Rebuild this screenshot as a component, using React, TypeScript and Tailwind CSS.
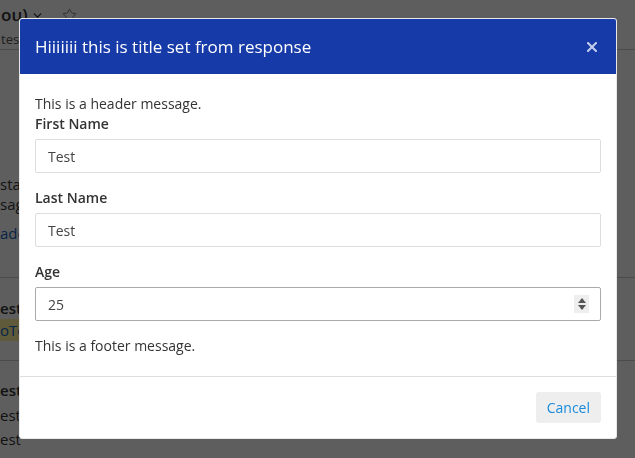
import { ChevronDown, Star } from "lucide-react";

function Backdrop() {
  return (
    <div className="h-[458px] w-[635px] overflow-hidden bg-white text-[#333]" style={{ fontFamily: '"Open Sans", sans-serif' }}>
      <div className="flex h-[30px] items-center">
        <span className="ml-[1px] text-[17px] font-semibold">ou)</span>
        <ChevronDown className="ml-[3px] h-[13px] w-[13px]" strokeWidth={2.5} />
        <Star className="ml-[18px] h-[15px] w-[15px] text-[#777]" strokeWidth={1.5} />
      </div>
      <div className="ml-[1px] h-[19px] text-[13px] leading-[19px] text-[#555]">tes</div>
      <div className="border-b border-[#ccc]" />
      <div className="h-[124px]" />
      <div className="flex flex-col text-[15px] leading-[20px]">
        <span>star</span>
        <span>sag</span>
        <span className="mt-[9px] text-[#1565c0]">ade</span>
      </div>
      <div className="mt-[34px] border-b border-[#ccc]" />
      <div className="mt-[19px] flex flex-col text-[15px] leading-[22px]">
        <span className="font-semibold">est</span>
        <span className="w-fit bg-[#fff59d] text-[#1565c0]">oTe</span>
      </div>
      <div className="mt-[19px] border-b border-[#ccc]" />
      <div className="mt-[17px] flex flex-col text-[15px] leading-[24.5px]">
        <span className="font-semibold">est</span>
        <span>est</span>
        <span>est</span>
      </div>
    </div>
  );
}

export default function App() {
  return (
    <div className="relative h-[458px] w-[635px] overflow-hidden">
      <Backdrop />
      <div className="fixed inset-0 flex items-start bg-black/[0.63] pl-[19px] pt-[18px]" style={{ fontFamily: '"Open Sans", sans-serif' }}>
        <div className="w-[598px] overflow-hidden rounded-[3px] border border-[#e8e8e8] bg-white text-[14px] text-[#333]">
          <div className="flex h-[55px] items-center justify-between bg-[#163aa8] pl-[15px] pr-[19px]">
            <h2 className="text-[17px] text-white">Hiiiiiii this is title set from response</h2>
            <svg viewBox="0 0 10 10" className="h-[10px] w-[10px]" stroke="#c5d0ee" strokeWidth={2} strokeLinecap="square">
              <path d="M1 1 L9 9 M9 1 L1 9" />
            </svg>
          </div>
          <div className="px-[15px] pt-[20px] pb-[20px] leading-[20px]">
            <p>This is a header message.</p>
            <label className="block font-semibold">First Name</label>
            <input
              readOnly
              value="Test"
              className="mt-[5px] block h-[34px] w-full rounded-[2px] border border-[#ddd] px-[12px] text-[14px] text-[#444] outline-none"
            />
            <label className="mt-[15px] block font-semibold">Last Name</label>
            <input
              readOnly
              value="Test"
              className="mt-[5px] block h-[34px] w-full rounded-[2px] border border-[#ddd] px-[12px] text-[14px] text-[#444] outline-none"
            />
            <label className="mt-[15px] block font-semibold">Age</label>
            <div className="relative mt-[5px]">
              <input
                readOnly
                value="25"
                className="block h-[34px] w-full rounded-[2px] border border-[#aaa] px-[12px] text-[14px] text-[#444] outline-none"
              />
              <div className="absolute right-[12px] top-[8px] flex h-[18px] w-[15px] flex-col items-center justify-center gap-[2px] bg-[#eee]">
                <span className="h-0 w-0 border-x-[4px] border-b-[5px] border-x-transparent border-b-[#555]" />
                <span className="h-0 w-0 border-x-[4px] border-t-[5px] border-x-transparent border-t-[#555]" />
              </div>
            </div>
            <p className="mt-[15px]">This is a footer message.</p>
          </div>
          <div className="flex justify-end border-t border-[#ddd] px-[15px] pt-[15px] pb-[15px]">
            <button className="h-[31px] rounded-[3px] bg-[#eee] px-[11px] text-[14px] text-[#1a8cdb]">Cancel</button>
          </div>
        </div>
      </div>
    </div>
  );
}
